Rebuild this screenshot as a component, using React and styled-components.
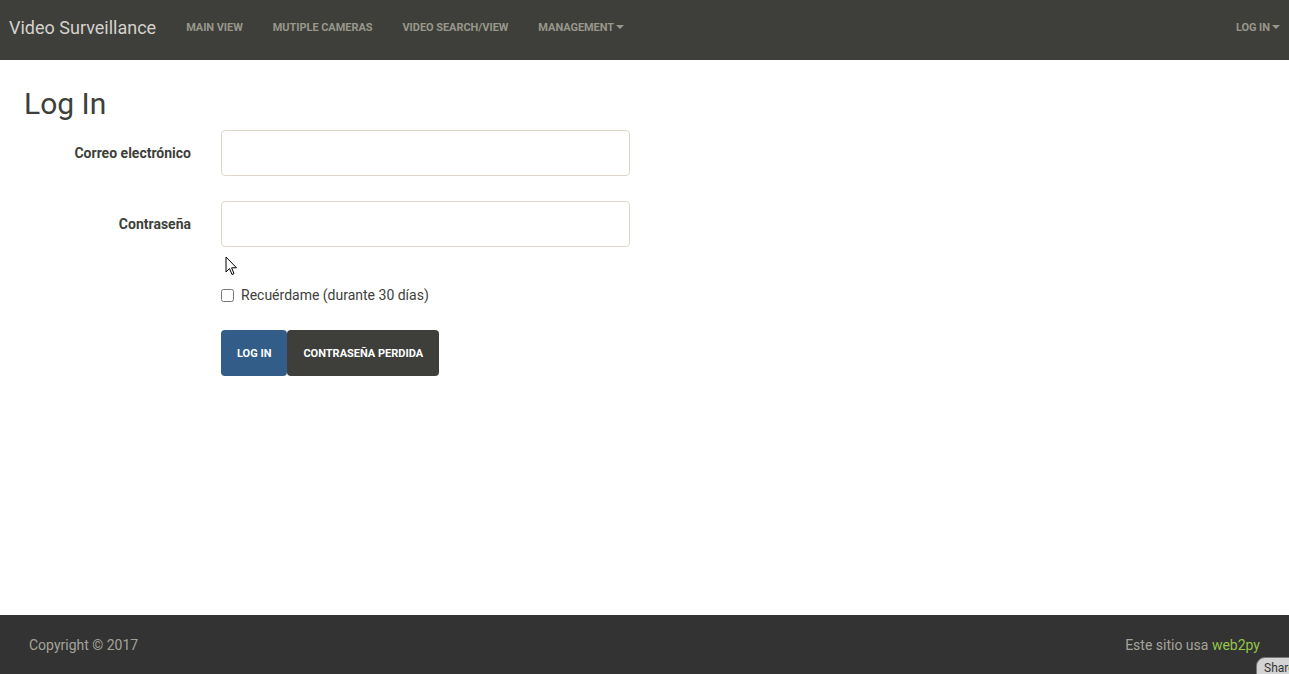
import styled, { createGlobalStyle } from "styled-components";

const GlobalStyle = createGlobalStyle`
  html, body {
    margin: 0;
    padding: 0;
    background: #ffffff;
    font-family: Roboto, "Liberation Sans", sans-serif;
    color: #3e3f3a;
  }
  * {
    box-sizing: border-box;
  }
`;

const Page = styled.div`
  display: flex;
  flex-direction: column;
  height: 100vh;
  overflow: hidden;
  position: relative;
`;

const Navbar = styled.nav`
  height: 60px;
  flex: none;
  background: #3e3f3a;
  display: flex;
  align-items: center;
  padding: 0 9px 6px 9px;
`;

const Brand = styled.a`
  font-size: 18px;
  color: #d3d2cd;
  margin-right: 15px;
  white-space: nowrap;
`;

const NavLink = styled.a`
  font-size: 11px;
  font-weight: 700;
  text-transform: uppercase;
  color: #98978b;
  padding: 0 15px;
  display: flex;
  align-items: center;
  white-space: nowrap;
  letter-spacing: -0.05px;
  margin-left: ${(p) => (p.$right ? "auto" : "0")};
  padding-right: ${(p) => (p.$right ? "0" : "15px")};
`;

const Caret = styled.span`
  display: inline-block;
  width: 0;
  height: 0;
  margin-left: 2px;
  border-top: 4px solid #98978b;
  border-left: 4px solid transparent;
  border-right: 4px solid transparent;
`;

const Main = styled.main`
  flex: 1;
  padding: 0 24px;
`;

const Title = styled.h2`
  font-size: 30px;
  font-weight: 400;
  line-height: 1.1;
  margin: 27px 0 10px;
  color: #3e3f3a;
`;

const Row = styled.div`
  display: grid;
  grid-template-columns: 167px 409px;
  column-gap: 30px;
  align-items: center;
  margin-bottom: ${(p) => p.$mb || "25px"};
`;

const Label = styled.label`
  font-size: 14px;
  font-weight: 700;
  text-align: right;
  color: #3e3f3a;
`;

const Input = styled.input`
  height: 46px;
  width: 100%;
  border: 1px solid #dfd7ca;
  border-radius: 4px;
  padding: 0 12px;
  font-size: 14px;
  font-family: inherit;
  outline: none;
`;

const CheckLabel = styled.label`
  display: flex;
  align-items: center;
  font-size: 14px;
  line-height: 20px;
  color: #3e3f3a;
  grid-column: 2;
`;

const Check = styled.input`
  margin: 0 7px 0 0;
  width: 13px;
  height: 13px;
`;

const Buttons = styled.div`
  display: flex;
  grid-column: 2;
`;

const Button = styled.button`
  height: 46px;
  padding: 0 16px;
  border: none;
  border-radius: 4px;
  background: ${(p) => (p.$primary ? "#325d88" : "#3e3f3a")};
  color: #ffffff;
  font-family: inherit;
  font-size: 11px;
  font-weight: 700;
  text-transform: uppercase;
  cursor: pointer;
`;

const Footer = styled.footer`
  height: 59px;
  flex: none;
  background: #333333;
  display: flex;
  justify-content: space-between;
  padding: 20px 29px 0;
  font-size: 14px;
  line-height: 20px;
  color: #a4a39a;
`;

const Green = styled.a`
  color: #93c54b;
`;

const ShareTab = styled.div`
  position: absolute;
  left: 1256px;
  top: 657px;
  width: 60px;
  height: 30px;
  padding: 2px 0 0 7px;
  font-size: 12px;
  line-height: 16px;
  color: #333;
  background: #d4d4d4;
  border: 1px solid #777;
  border-top-left-radius: 9px;
`;

const Cursor = styled.svg`
  position: absolute;
  left: 225px;
  top: 256px;
`;

export default function App() {
  return (
    <Page>
      <GlobalStyle />
      <Navbar>
        <Brand>Video Surveillance</Brand>
        <NavLink>Main View</NavLink>
        <NavLink>Mutiple Cameras</NavLink>
        <NavLink>Video Search/View</NavLink>
        <NavLink>
          Management
          <Caret />
        </NavLink>
        <NavLink $right>
          Log In
          <Caret />
        </NavLink>
      </Navbar>
      <Main>
        <Title>Log In</Title>
        <Row>
          <Label>Correo electrónico</Label>
          <Input type="text" />
        </Row>
        <Row $mb="38px">
          <Label>Contraseña</Label>
          <Input type="password" />
        </Row>
        <Row>
          <CheckLabel>
            <Check type="checkbox" />
            Recuérdame (durante 30 días)
          </CheckLabel>
        </Row>
        <Row>
          <Buttons>
            <Button $primary>Log In</Button>
            <Button>Contraseña perdida</Button>
          </Buttons>
        </Row>
      </Main>
      <Footer>
        <span>Copyright © 2017</span>
        <span>
          Este sitio usa <Green>web2py</Green>
        </span>
      </Footer>
      <ShareTab>Share</ShareTab>
      <Cursor width="13" height="20" viewBox="0 0 13 20">
        <path d="M1 1 L1 16 L4.5 12.5 L7 18.5 L9 17.6 L6.6 11.8 L11.5 11.8 Z" fill="#fff" stroke="#000" strokeWidth="1" />
      </Cursor>
    </Page>
  );
}
